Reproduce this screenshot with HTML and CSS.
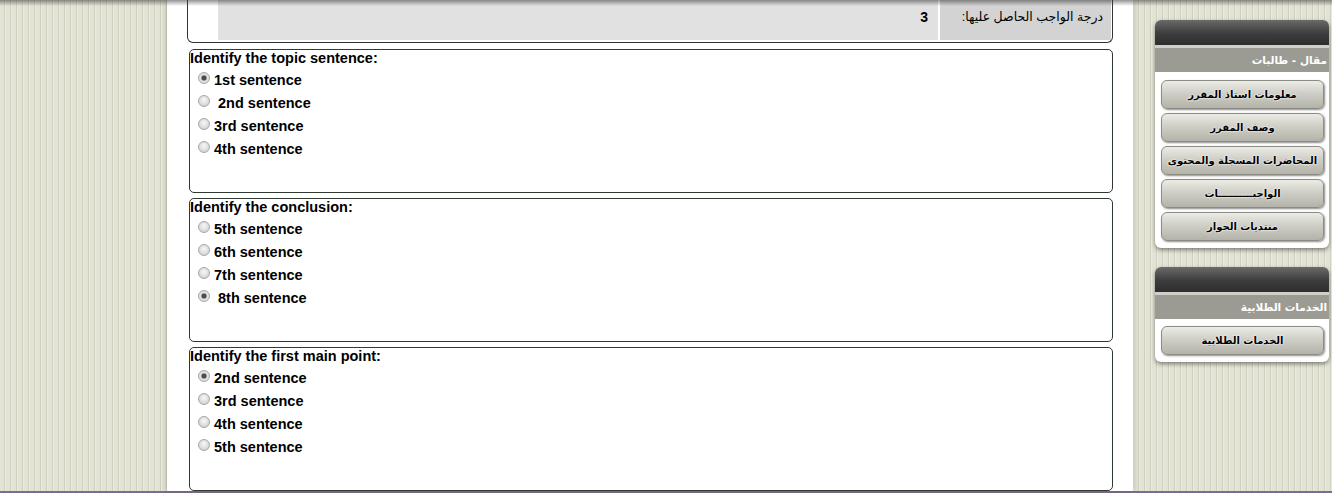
FILE: index.html
```html
<!DOCTYPE html>
<html lang="ar">
<head>
    <meta charset="UTF-8">
    <meta name="viewport" content="width=device-width, initial-scale=1.0">
    <title>الواجبات</title>
    <link rel="stylesheet" href="styles.css">
</head>
<body>
    <div class="shade"></div>
    <div class="layout">
        <main class="page">
            <div class="grade" dir="rtl">
                <div class="grade-label">درجة الواجب الحاصل عليها:</div>
                <div class="grade-value">3</div>
            </div>

            <div class="question">
                <div class="q-title">Identify the topic sentence:</div>
                <label class="option"><input type="radio" name="q1" checked><span>1st sentence</span></label>
                <label class="option"><input type="radio" name="q1"><span>&nbsp;2nd sentence</span></label>
                <label class="option"><input type="radio" name="q1"><span>3rd sentence</span></label>
                <label class="option"><input type="radio" name="q1"><span>4th sentence</span></label>
            </div>

            <div class="question">
                <div class="q-title">Identify the conclusion:</div>
                <label class="option"><input type="radio" name="q2"><span>5th sentence</span></label>
                <label class="option"><input type="radio" name="q2"><span>6th sentence</span></label>
                <label class="option"><input type="radio" name="q2"><span>7th sentence</span></label>
                <label class="option"><input type="radio" name="q2" checked><span>&nbsp;8th sentence</span></label>
            </div>

            <div class="question">
                <div class="q-title">Identify the first main point:</div>
                <label class="option"><input type="radio" name="q3" checked><span>2nd sentence</span></label>
                <label class="option"><input type="radio" name="q3"><span>3rd sentence</span></label>
                <label class="option"><input type="radio" name="q3"><span>4th sentence</span></label>
                <label class="option"><input type="radio" name="q3"><span>5th sentence</span></label>
            </div>
        </main>

        <aside class="sidebar" dir="rtl">
            <div class="panel">
                <div class="panel-head"></div>
                <div class="panel-title">مقال - طالبات</div>
                <div class="panel-body">
                    <a href="#" class="side-btn">معلومات استاذ المقرر</a>
                    <a href="#" class="side-btn">وصف المقرر</a>
                    <a href="#" class="side-btn">المحاضرات المسجلة والمحتوى</a>
                    <a href="#" class="side-btn">الواجبــــــــــات</a>
                    <a href="#" class="side-btn">منتديات الحوار</a>
                </div>
            </div>
            <div class="panel">
                <div class="panel-head"></div>
                <div class="panel-title">الخدمات الطلابية</div>
                <div class="panel-body">
                    <a href="#" class="side-btn">الخدمات الطلابية</a>
                </div>
            </div>
        </aside>
    </div>
    <div class="footer-line"></div>
</body>
</html>
```

FILE: styles.css
```css
body, html {
    margin: 0;
    padding: 0;
    overflow: hidden;
    font-family: 'Liberation Sans', 'DejaVu Sans', sans-serif;
    color: #000;
    background: repeating-linear-gradient(90deg, #e3e3d5 0 4px, #cfcfbf 4px 5px, #ebebdf 5px 6px);
}
.shade {
    position: fixed;
    top: 0;
    left: 0;
    right: 0;
    height: 6px;
    background: linear-gradient(to bottom, rgba(60,60,60,0.55), rgba(60,60,60,0));
}
.layout {
    display: flex;
    align-items: flex-start;
    height: 491px;
    padding-left: 167px;
    gap: 22px;
}
.page {
    width: 926px;
    height: 491px;
    padding: 0 20px;
    background: #fff;
    box-shadow: 0 0 6px rgba(70,70,50,0.35);
}
.grade {
    display: flex;
    gap: 2px;
    height: 40px;
    padding: 0 1px 2px 30px;
    border: 1px solid #333;
    border-top: none;
    border-radius: 0 0 6px 6px;
    font-size: 12.5px;
    line-height: 17px;
}
.grade-label {
    width: 155px;
    padding: 9px 8px 14px;
    background: #d3d3d3;
}
.grade-value {
    flex: 1;
    padding: 9px 10px 14px;
    background: #e1e1e1;
    font-weight: bold;
    font-size: 14px;
}
.question {
    height: 142px;
    margin: 6px 0 0 2px;
    border: 1px solid #2f3a30;
    border-radius: 5px;
    font-size: 14.5px;
    font-weight: bold;
}
.question + .question {
    margin-top: 5px;
}
.q-title {
    line-height: 17px;
    margin-bottom: 1px;
}
.option {
    display: flex;
    align-items: center;
    height: 23px;
}
.option input {
    appearance: none;
    -webkit-appearance: none;
    width: 12px;
    height: 12px;
    margin: -3px 4px 0 8px;
    border: 1px solid #a8a8a8;
    border-radius: 50%;
    background: radial-gradient(circle at 50% 40%, #f8f8f8, #d6d6d6 70%, #c8c8c8);
    box-sizing: border-box;
}
.option input:checked {
    background: radial-gradient(circle, #4a4a4a 0 2px, #939393 2.5px, #e4e4e4 3.5px, #d2d2d2 100%);
}
.sidebar {
    width: 174px;
    padding-top: 20px;
}
.panel {
    background: #fff;
    border-radius: 6px;
    box-shadow: 0 2px 4px rgba(0,0,0,0.45);
    margin-bottom: 19px;
    overflow: hidden;
}
.panel-head {
    height: 25px;
    background: linear-gradient(to bottom, #6a6a6a, #3c3c3c 55%, #2e2e2e);
    border-bottom: 3px solid #cfcfc8;
}
.panel-title {
    height: 24px;
    line-height: 24px;
    padding-right: 2px;
    background: #9b9b93;
    color: #fff;
    font-size: 10.5px;
    font-weight: bold;
    font-family: 'DejaVu Sans', sans-serif;
}
.panel-body {
    display: flex;
    flex-direction: column;
    gap: 4px;
    padding: 8px 5px 7px 6px;
}
.panel + .panel .panel-body {
    padding-top: 7px;
}
.side-btn {
    display: block;
    height: 27px;
    line-height: 27px;
    text-align: center;
    text-decoration: none;
    color: #000;
    font-family: 'DejaVu Sans', sans-serif;
    font-size: 10px;
    font-weight: bold;
    white-space: nowrap;
    border: 1px solid #8c8c84;
    border-radius: 6px;
    background: linear-gradient(to bottom, #ecece6, #cfcfc7 45%, #b3b3aa);
    box-shadow: 1px 1px 2px rgba(0,0,0,0.45);
    text-shadow: 0 0 2px #fff, 0 0 2px #fff;
}
.footer-line {
    height: 2px;
    background: #7b6d8f;
}
```
